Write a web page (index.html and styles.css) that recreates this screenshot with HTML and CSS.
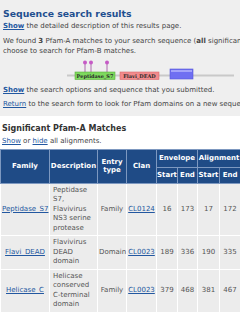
FILE: index.html
```html
<!DOCTYPE html>
<html lang="en">
<head>
  <meta charset="UTF-8" />
  <meta name="viewport" content="width=device-width, initial-scale=1.0"/>
  <title>Pfam sequence search results</title>
  <link rel="stylesheet" href="styles.css">
</head>
<body>
  <div class="summary">
    <h1>Sequence search results</h1>
    <p class="first"><a href="#" class="strong">Show</a> the detailed description of this results page.</p>
    <p class="found">We found <b>3</b> Pfam-A matches to your search sequence (<b>all</b> significant). You may also<br>
      choose to search for Pfam-B matches.</p>

    <!-- domain graphic -->
    <svg class="graphic" width="240" height="21" viewBox="0 0 240 21">
      <line x1="67" y1="15.5" x2="234" y2="15.5" stroke="#c9c9c9" stroke-width="2"/>
      <line x1="85" y1="3" x2="85" y2="12" stroke="#a04aa0" stroke-width="0.8"/>
      <line x1="91" y1="3" x2="91" y2="12" stroke="#a04aa0" stroke-width="0.8"/>
      <line x1="107" y1="3" x2="107" y2="12" stroke="#a04aa0" stroke-width="0.8"/>
      <circle cx="85" cy="2.6" r="2" fill="#c65ac6"/>
      <circle cx="91" cy="2.6" r="2" fill="#c65ac6"/>
      <circle cx="107" cy="2.6" r="2" fill="#c65ac6"/>
      <rect x="75" y="12" width="40" height="7.5" fill="#7ed95e" stroke="#5cb03f" stroke-width="0.6"/>
      <text x="95" y="18" class="dom">Peptidase_S7</text>
      <rect x="120" y="12" width="39" height="7.5" fill="#f28a8c" stroke="#d86a6c" stroke-width="0.6"/>
      <text x="139.5" y="18" class="dom">Flavi_DEAD</text>
      <rect x="170" y="9" width="23" height="10" fill="#6f6ff2" stroke="#5555d8" stroke-width="0.6"/>
      <rect x="171" y="10" width="21" height="2" fill="#a3a3fa"/>
    </svg>

    <p class="options"><a href="#" class="strong">Show</a> the search options and sequence that you submitted.</p>
    <p class="return"><a href="#">Return</a> to the search form to look for Pfam domains on a new sequence.</p>
  </div>

  <h2>Significant Pfam-A Matches</h2>
  <p class="toggle"><a href="#">Show</a> or <a href="#">hide</a> all alignments.</p>

  <table class="results">
    <colgroup>
      <col style="width:49px"><col style="width:48px"><col style="width:29px"><col style="width:30px">
      <col style="width:21px"><col style="width:20px"><col style="width:22px"><col style="width:21px">
    </colgroup>
    <thead>
      <tr>
        <th rowspan="2">Family</th>
        <th rowspan="2">Description</th>
        <th rowspan="2">Entry type</th>
        <th rowspan="2">Clan</th>
        <th colspan="2">Envelope</th>
        <th colspan="2">Alignment</th>
      </tr>
      <tr>
        <th class="sub">Start</th><th class="sub">End</th>
        <th class="sub">Start</th><th class="sub">End</th>
      </tr>
    </thead>
    <tbody>
      <tr>
        <td><a href="#">Peptidase_S7</a></td>
        <td class="desc">Peptidase S7, Flavivirus NS3 serine protease</td>
        <td>Family</td>
        <td><a href="#">CL0124</a></td>
        <td>16</td><td>173</td><td>17</td><td>172</td>
      </tr>
      <tr>
        <td><a href="#">Flavi_DEAD</a></td>
        <td class="desc">Flavivirus DEAD domain</td>
        <td>Domain</td>
        <td><a href="#">CL0023</a></td>
        <td>189</td><td>336</td><td>190</td><td>335</td>
      </tr>
      <tr>
        <td><a href="#">Helicase_C</a></td>
        <td class="desc">Helicase conserved C-terminal domain</td>
        <td>Family</td>
        <td><a href="#">CL0023</a></td>
        <td>379</td><td>468</td><td>381</td><td>467</td>
      </tr>
    </tbody>
  </table>
</body>
</html>
```

FILE: styles.css
```css
body {
  margin: 0;
  font-family: 'DejaVu Sans', Verdana, sans-serif;
  font-size: 7px;
  line-height: 9.5px;
  color: #444;
  background: #fff;
  overflow-x: hidden;
}

a {
  color: #2257a0;
}

a.strong {
  font-weight: bold;
}

p {
  margin: 0;
  white-space: nowrap;
}

.summary {
  background: #efefef;
  padding: 7px 3px 6px;
  overflow: hidden;
}

h1 {
  margin: 0;
  font-size: 9.3px;
  line-height: 13px;
  color: #1f4f8f;
}

.first {
  margin-top: 2px;
}

.found {
  margin-top: 5.75px;
}

.graphic {
  display: block;
  margin: 3.5px 0 0 -3px;
}

.dom {
  font-family: 'DejaVu Serif', serif;
  font-size: 5px;
  font-weight: bold;
  fill: #2a2a2a;
  text-anchor: middle;
}

.options {
  margin-top: 5.25px;
}

.return {
  margin-top: 4.5px;
}

h2 {
  margin: 7.5px 0 0 2px;
  font-size: 8px;
  line-height: 11px;
  color: #333;
}

.toggle {
  margin: 2.5px 0 0 2px;
}

.results {
  margin-top: 2.5px;
  width: 240px;
  table-layout: fixed;
  border-collapse: collapse;
}

.results th {
  background: #1f4b86;
  color: #fff;
  font-weight: bold;
  border: 1px solid #7d98c0;
  padding: 1px 0;
  line-height: 8px;
  height: 15px;
}

.results th.sub {
  height: 13px;
}

.results td {
  background: #ececec;
  color: #555;
  border: 1px solid #fff;
  text-align: center;
  vertical-align: middle;
  padding: 2px 1px;
}

.results td.desc {
  text-align: left;
  padding-left: 3px;
}
```
